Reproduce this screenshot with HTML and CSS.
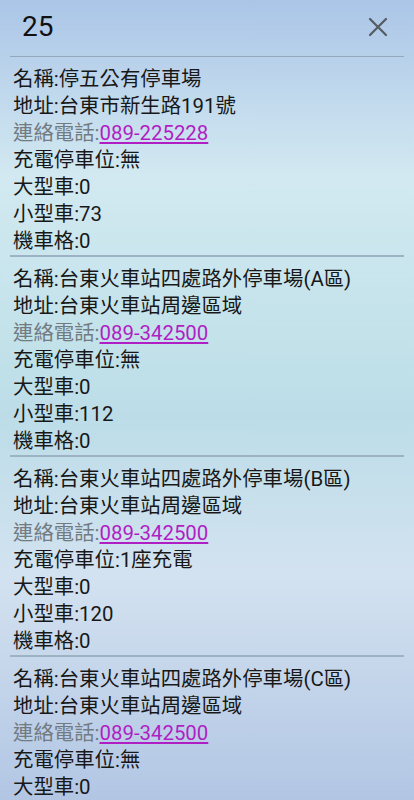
FILE: index.html
```html
<!DOCTYPE html>
<html lang="zh-Hant">
<head>
    <meta charset="UTF-8">
    <meta name="viewport" content="width=device-width, initial-scale=1.0">
    <title>停車場</title>
    <link rel="stylesheet" href="styles.css">
</head>
<body>
    <div class="dialog">
        <div class="header">
            <span class="count">25</span>
            <svg class="close" width="20" height="20" viewBox="0 0 20 20">
                <path d="M2 2 L18 18 M18 2 L2 18" stroke="#545b63" stroke-width="2.2" stroke-linecap="round"/>
            </svg>
        </div>

        <div class="lot">
            <div>名稱:停五公有停車場</div>
            <div>地址:台東市新生路191號</div>
            <div class="tel">連絡電話:<a href="#">089-225228</a></div>
            <div>充電停車位:無</div>
            <div>大型車:0</div>
            <div>小型車:73</div>
            <div>機車格:0</div>
        </div>

        <div class="lot">
            <div>名稱:台東火車站四處路外停車場(A區)</div>
            <div>地址:台東火車站周邊區域</div>
            <div class="tel">連絡電話:<a href="#">089-342500</a></div>
            <div>充電停車位:無</div>
            <div>大型車:0</div>
            <div>小型車:112</div>
            <div>機車格:0</div>
        </div>

        <div class="lot">
            <div>名稱:台東火車站四處路外停車場(B區)</div>
            <div>地址:台東火車站周邊區域</div>
            <div class="tel">連絡電話:<a href="#">089-342500</a></div>
            <div>充電停車位:1座充電</div>
            <div>大型車:0</div>
            <div>小型車:120</div>
            <div>機車格:0</div>
        </div>

        <div class="lot">
            <div>名稱:台東火車站四處路外停車場(C區)</div>
            <div>地址:台東火車站周邊區域</div>
            <div class="tel">連絡電話:<a href="#">089-342500</a></div>
            <div>充電停車位:無</div>
            <div>大型車:0</div>
            <div>小型車:0</div>
            <div>機車格:0</div>
        </div>
    </div>
</body>
</html>
```

FILE: styles.css
```css
* {
    margin: 0;
    padding: 0;
    box-sizing: border-box;
}

body, html {
    height: 100%;
    overflow: hidden;
}

body {
    font-family: Roboto, "Noto Sans CJK TC", sans-serif;
    color: #181818;
    background: linear-gradient(to bottom,
        #abc5e7 0%,
        #d2e9f1 22%,
        #c3e2ea 42%,
        #bcdde8 52%,
        #d3e2f0 72%,
        #b2c6e4 100%);
}

.dialog {
    padding: 0 10px;
}

.header {
    height: 57px;
    display: flex;
    align-items: center;
    justify-content: space-between;
    padding: 0 16px 3px 12px;
    border-bottom: 1px solid #93a8bc;
}

.count {
    font-size: 28px;
    color: #111;
}

.close {
    display: block;
}

.lot {
    padding: 9px 0 0 3px;
    font-size: 20.4px;
    line-height: 27px;
    border-bottom: 2px solid #9db3c4;
    white-space: nowrap;
}

.tel {
    color: #737b82;
}

.tel a {
    color: #b01fc4;
}
```
